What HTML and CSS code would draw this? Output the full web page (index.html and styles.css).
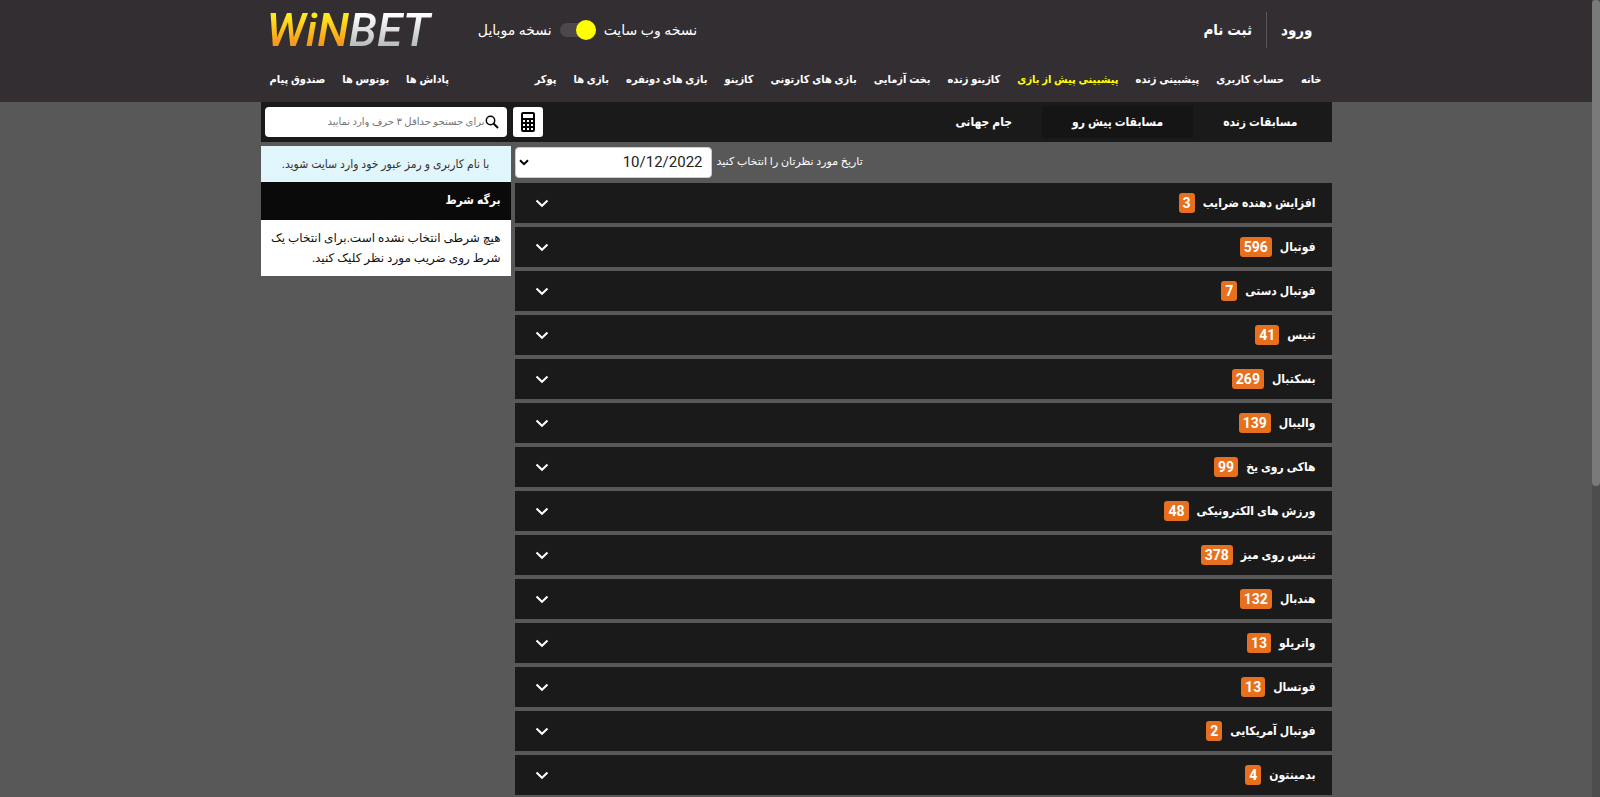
FILE: index.html
```html
<!DOCTYPE html>
<html lang="fa" dir="rtl">
<head>
<meta charset="utf-8">
<title>WinBet</title>
<link rel="stylesheet" href="styles.css">
</head>
<body>
<div class="page">
  <header class="header">
    <div class="container">
      <div class="topbar">
        <div class="account">
          <a class="login" href="#">ورود</a>
          <a class="register" href="#">ثبت نام</a>
        </div>
        <label class="version">
          <span>نسخه وب سایت</span>
          <input class="switch" type="checkbox" checked>
          <span>نسخه موبایل</span>
        </label>
        <a class="logo" href="#" dir="ltr"><span class="logo-win">WiN</span><span class="logo-bet">BET</span></a>
      </div>
      <nav class="nav">
        <div class="nav-group">
          <a href="#">خانه</a>
          <a href="#">حساب کاربری</a>
          <a href="#">پیشبینی زنده</a>
          <a class="current" href="#">پیشبینی پیش از بازی</a>
          <a href="#">کازینو زنده</a>
          <a href="#">بخت آزمایی</a>
          <a href="#">بازی های کارتونی</a>
          <a href="#">کازینو</a>
          <a href="#">بازی های دونفره</a>
          <a href="#">بازی ها</a>
          <a href="#">پوکر</a>
        </div>
        <div class="nav-group">
          <a href="#">پاداش ها</a>
          <a href="#">بونوس ها</a>
          <a href="#">صندوق پیام</a>
        </div>
      </nav>
    </div>
  </header>

  <div class="container">
    <div class="toolbar">
      <div class="tabs">
        <a class="tab" href="#">مسابقات زنده</a>
        <a class="tab active" href="#">مسابقات پیش رو</a>
        <a class="tab" href="#">جام جهانی</a>
      </div>
      <div class="tools">
        <button class="calc" type="button" aria-label="ماشین حساب">
          <svg viewBox="0 0 16 22" width="16" height="22"><rect x="1" y="1" width="14" height="20" rx="2"/><g fill="#fff"><rect x="3" y="3" width="10" height="4"/><rect x="3" y="9" width="2" height="2"/><rect x="7" y="9" width="2" height="2"/><rect x="11" y="9" width="2" height="2"/><rect x="3" y="13" width="2" height="2"/><rect x="7" y="13" width="2" height="2"/><rect x="11" y="13" width="2" height="2"/><rect x="3" y="17" width="2" height="2"/><rect x="7" y="17" width="2" height="2"/><rect x="11" y="17" width="2" height="2"/></g></svg>
        </button>
        <label class="search">
          <svg viewBox="0 0 14 14" width="14" height="14"><circle cx="5.5" cy="5.5" r="4.2" fill="none" stroke="#000" stroke-width="1.5"/><path d="M8.5 8.5 13 13" stroke="#000" stroke-width="2"/></svg>
          <input type="text" placeholder="برای جستجو حداقل ۳ حرف وارد نمایید" aria-label="جستجو">
        </label>
      </div>
    </div>

    <div class="columns">
      <main class="main">
        <div class="date">
          <label for="day">تاریخ مورد نظرتان را انتخاب کنید</label>
          <div class="select">
            <select id="day"><option>10/12/2022</option></select>
            <svg viewBox="0 0 10 7" width="10" height="7"><path d="M1 1.2 5 5.2 9 1.2" fill="none" stroke="#000" stroke-width="2"/></svg>
          </div>
        </div>
        <div class="sports" id="sports"></div>
      </main>
      <aside class="slip">
        <p class="notice">با نام کاربری و رمز عبور خود وارد سایت شوید.</p>
        <h2>برگه شرط</h2>
        <p class="empty">هیچ شرطی انتخاب نشده است.برای انتخاب یک شرط روی ضریب مورد نظر کلیک کنید.</p>
      </aside>
    </div>
  </div>
</div>
<div class="scroll-track"><div class="scroll-thumb"></div></div>
<script src="app.js"></script>
</body>
</html>
```
FILE: styles.css
```css
* { box-sizing: border-box; }
html { height: 100%; }
body {
  display: flex;
  flex-direction: row-reverse;
  height: 100%;
  margin: 0;
  overflow: hidden;
  background: #585858;
  color: #fff;
  font: 14px/20px Roboto, "DejaVu Sans", sans-serif;
}
a { color: inherit; text-decoration: none; }
p, h2 { margin: 0; }
button, input, select { font: inherit; }
.account, .nav, .tabs, .sport, .notice, .slip h2 {
  font-family: Roboto, "DejaVu Sans Condensed", "DejaVu Sans", sans-serif;
  font-weight: 700;
}

.page { flex: 1; min-width: 0; }
.container { width: 100%; max-width: 1071px; margin: 0 auto; }
.header { background: #332e31; }

.topbar {
  display: grid;
  grid-template-columns: 1fr auto auto;
  align-items: center;
  height: 60px;
  padding: 0 8px 0 6px;
}
.account { display: flex; font-size: 15px; }
.account a { padding: 8px 14px; line-height: 20px; }
.account .login { padding-right: 11px; border-left: 1px solid #5a5659; }
.version { display: flex; align-items: center; gap: 8px; font-size: 14px; }
.switch {
  appearance: none;
  display: flex;
  align-items: center;
  width: 36px;
  height: 14px;
  margin: 0;
  background: #4c484b;
  border-radius: 7px;
}
.switch::before { content: ""; width: 20px; height: 20px; border-radius: 50%; background: #ff0; }
.logo {
  display: flex;
  margin-right: 48px;
  font-size: 46px;
  font-style: italic;
  font-weight: 500;
  line-height: 52px;
}
.logo span { background-clip: text; -webkit-background-clip: text; color: transparent; }
.logo-win { background-image: linear-gradient(#ffec1c 20%, #f7941d 80%); }
.logo-bet { margin-right: -4px; padding-right: 4px; background-image: linear-gradient(#fff 20%, #b9bcc0 80%); }

.nav {
  display: flex;
  justify-content: space-between;
  height: 42px;
  padding: 0 10px 0 9px;
  font-size: 11px;
  line-height: 40px;
  white-space: nowrap;
}
.nav-group { display: flex; gap: 17px; }
.current { color: #ff0; }

.toolbar {
  display: flex;
  justify-content: space-between;
  align-items: center;
  height: 40px;
  padding: 0 4px;
  background: #1a1a1a;
}
.tabs { display: flex; font-size: 12px; line-height: 32px; }
.tab { padding: 0 30px; }
.tab.active { background: #151515; }
.tools { display: flex; gap: 6px; }
.calc {
  display: grid;
  place-items: center;
  width: 30px;
  height: 30px;
  padding: 0;
  border: 0;
  border-radius: 3px;
  background: #fff;
}
.search {
  display: flex;
  align-items: center;
  width: 242px;
  height: 30px;
  padding: 0 8px;
  border-radius: 4px;
  background: #fff;
}
.search input { flex: 1; min-width: 0; padding: 0; border: 0; outline: 0; background: none; font-size: 10px; }
.search input::placeholder { color: #757575; }

.columns { display: flex; align-items: flex-start; gap: 4px; padding-top: 4px; }
.main { flex: 1; min-width: 0; }
.date { display: flex; justify-content: flex-end; align-items: center; gap: 5px; height: 37px; padding-bottom: 5px; font-size: 11px; }
.select { position: relative; width: 197px; }
.select select {
  display: block;
  appearance: none;
  width: 100%;
  height: 31px;
  padding: 0 8px;
  border: 1px solid #ccc;
  border-radius: 4px;
  background: #fff;
  color: #222;
  font-size: 15px;
}
.select svg { position: absolute; left: 4px; top: 12px; }

.sports { display: grid; gap: 4px; }
.sport {
  display: flex;
  align-items: center;
  gap: 8px;
  width: 100%;
  height: 40px;
  padding: 0 16px 0 20px;
  border: 0;
  background: #1a1a1a;
  color: #fff;
  font-size: 12px;
}
.sport svg { margin-right: auto; }
.count { padding: 0 4px; border-radius: 3px; background: #e6701e; font-size: 14px; line-height: 20px; }

.slip { width: 250px; }
.notice { padding: 8px 0; background: #e1f5fc; color: #333; font-size: 12px; font-weight: 400; text-align: center; }
.slip h2 { padding: 8px 10px 10px; background: #0a0a0a; font-size: 12px; line-height: 20px; }
.empty { padding: 8px 10px; background: #fff; color: #111; font-size: 12px; }

.scroll-track { width: 8px; height: 100%; background: #4d4d4d; }
.scroll-thumb { height: 61%; border-radius: 4px; background: #7a7a7a; }
```
FILE: app.js
```js
const sports = [
  ["افزایش دهنده ضرایب", 3],
  ["فوتبال", 596],
  ["فوتبال دستی", 7],
  ["تنیس", 41],
  ["بسکتبال", 269],
  ["والیبال", 139],
  ["هاکی روی یخ", 99],
  ["ورزش های الکترونیکی", 48],
  ["تنیس روی میز", 378],
  ["هندبال", 132],
  ["واترپلو", 13],
  ["فوتسال", 13],
  ["فوتبال آمریکایی", 2],
  ["بدمینتون", 4]
];

document.getElementById("sports").innerHTML = sports.map(([name, count]) => `
  <button class="sport" type="button">
    <span>${name}</span>
    <span class="count">${count}</span>
    <svg viewBox="0 0 14 9" width="14" height="9"><path d="M1.5 1.5 7 6.8 12.5 1.5" fill="none" stroke="#fff" stroke-width="2"/></svg>
  </button>`).join("");
```
